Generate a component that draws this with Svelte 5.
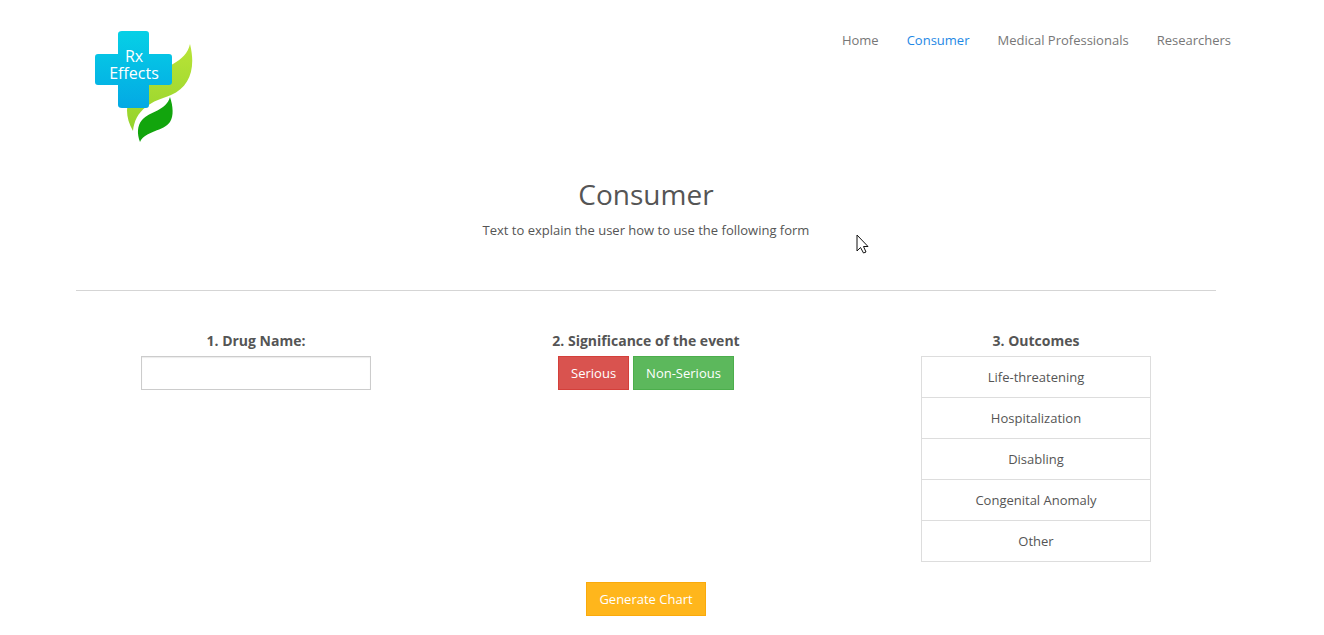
<script>
  const links = ['Home', 'Consumer', 'Medical Professionals', 'Researchers'];
  const outcomes = ['Life-threatening', 'Hospitalization', 'Disabling', 'Congenital Anomaly', 'Other'];
  let active = $state('Consumer');
  let drug = $state('');
</script>

<div class="page">
  <div class="container">
    <header>
      <a class="logo" href="#home" aria-label="Rx Effects">
        <svg width="100" height="114" viewBox="0 0 100 114">
          <defs>
            <linearGradient id="cross" x1="0" y1="0" x2="0" y2="1">
              <stop offset="0" stop-color="#06d0e6" />
              <stop offset="1" stop-color="#03a9e4" />
            </linearGradient>
            <linearGradient id="leaf" x1="0" y1="0" x2="0" y2="1">
              <stop offset="0" stop-color="#b9e437" />
              <stop offset="1" stop-color="#94d32c" />
            </linearGradient>
          </defs>
          <path d="M95 14C101 38 95 57 76 65C66 69 58 71 51 77C43 83 39 91 38 101C30 87 30 74 38 60C48 43 66 41 78 34C87 29 93 23 95 14Z" fill="url(#leaf)" />
          <path d="M73 69C69 77 61 77 52 81C43 85 39 92 39 102L43 112L80 90L78 66Z" fill="#fff" />
          <path d="M75 67C78 76 79 86 75 92C69 101 50 101 45 112C42 104 42 96 47 90C55 81 71 81 75 67Z" fill="#12a50d" />
          <path d="M27 1H51Q54 1 54 4V24H74Q77 24 77 27V52Q77 55 74 55H54V75Q54 78 51 78H27Q23 78 23 75V55H3Q0 55 0 52V27Q0 24 3 24H23V4Q23 1 27 1Z" fill="url(#cross)" />
          <text><tspan x="39" y="32">Rx</tspan><tspan x="39" y="49">Effects</tspan></text>
        </svg>
      </a>
      <nav>
        {#each links as link}
          <a href="#{link}" class:active={active === link} onclick={() => (active = link)}>{link}</a>
        {/each}
      </nav>
    </header>

    <main>
      <div class="intro">
        <h1>Consumer</h1>
        <p>Text to explain the user how to use the following form</p>
      </div>
      <form onsubmit={(e) => e.preventDefault()}>
        <div class="columns">
          <section>
            <label for="drug">1. Drug Name:</label>
            <input id="drug" type="text" bind:value={drug} />
          </section>
          <section>
            <h2>2. Significance of the event</h2>
            <div class="buttons">
              <button type="button" class="serious">Serious</button>
              <button type="button" class="mild">Non-Serious</button>
            </div>
          </section>
          <section>
            <h2>3. Outcomes</h2>
            <ul>
              {#each outcomes as outcome}
                <li>{outcome}</li>
              {/each}
            </ul>
          </section>
        </div>
        <button type="submit" class="generate">Generate Chart</button>
      </form>
    </main>
  </div>
  <svg class="cursor" width="13" height="20" viewBox="0 0 13 20" aria-hidden="true">
    <path d="M1 1V17L4.500 13.500L7.500 19L10 18L7.500 12.500H12Z" fill="#fff" stroke="#111" />
  </svg>
</div>

<style>
  :global(body) {
    margin: 0;
    background: #fff;
  }
  .page {
    position: relative;
    padding-right: 32px;
    color: #555;
    font: 13px/20px "Open Sans", "Noto Sans", sans-serif;
  }
  .container {
    max-width: 1170px;
    margin: 0 auto;
  }
  header {
    display: flex;
    justify-content: space-between;
    align-items: flex-start;
    padding: 30px 0 0 34px;
  }
  .logo svg {
    display: block;
  }
  .logo text {
    fill: #fff;
    font-size: 16px;
    text-anchor: middle;
  }
  nav {
    display: flex;
    flex-wrap: wrap;
    gap: 28px;
  }
  nav a {
    color: #777;
    text-decoration: none;
  }
  nav a.active {
    color: #1e88e5;
  }
  .intro {
    margin: 0 15px;
    padding: 34px 0 50px;
    border-bottom: 1px solid #d5d5d5;
    text-align: center;
  }
  h1 {
    margin: 0 0 10px;
    font-size: 28px;
    line-height: 32px;
    font-weight: 400;
  }
  p {
    margin: 0;
  }
  form {
    display: flex;
    flex-direction: column;
    align-items: center;
    gap: 20px;
    padding: 40px 0 20px;
  }
  .columns {
    display: grid;
    grid-template-columns: repeat(3, 1fr);
    width: 100%;
  }
  section {
    padding: 0 80px;
    text-align: center;
  }
  label,
  h2 {
    display: block;
    margin: 0 0 5px;
    font-size: 14px;
    line-height: 20px;
    font-weight: 700;
    white-space: nowrap;
  }
  input {
    box-sizing: border-box;
    width: 100%;
    height: 34px;
    padding: 6px 12px;
    border: 1px solid #ccc;
    border-radius: 0;
    box-shadow: inset 0 1px 1px rgba(0, 0, 0, 0.08);
    font: inherit;
    color: inherit;
  }
  .buttons {
    display: flex;
    justify-content: center;
    gap: 4px;
  }
  button {
    padding: 6px 12px;
    border: 1px solid;
    font: inherit;
    color: #fff;
    white-space: nowrap;
    cursor: pointer;
  }
  .serious {
    background: #d9534f;
    border-color: #d43f3a;
  }
  .mild {
    background: #5cb85c;
    border-color: #4cae4c;
  }
  .generate {
    background: #ffb61c;
    border-color: #faaa0c;
  }
  ul {
    margin: 0;
    padding: 0;
    list-style: none;
    border: 1px solid #ddd;
  }
  li {
    padding: 10px 15px;
  }
  li + li {
    border-top: 1px solid #ddd;
  }
  .cursor {
    position: absolute;
    left: 856px;
    top: 234px;
  }
</style>
